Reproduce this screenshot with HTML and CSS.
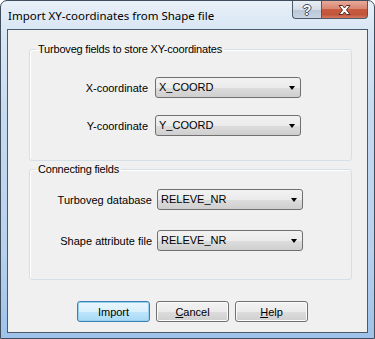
FILE: index.html
```html
<!DOCTYPE html>
<html lang="en">
<head>
    <meta charset="UTF-8">
    <meta name="viewport" content="width=device-width, initial-scale=1.0">
    <title>Import XY-coordinates from Shape file</title>
    <link rel="stylesheet" href="styles.css">
</head>
<body>

<div class="window">
    <div class="titlebar">
        <span class="title">Import XY-coordinates from Shape file</span>
        <div class="caption-buttons">
            <span class="caption-btn help-btn">?</span>
            <span class="caption-btn close-btn">
                <svg width="15" height="12" viewBox="0 0 15 12">
                    <path d="M2 1.5 L5.5 1.5 L7.5 4 L9.5 1.5 L13 1.5 L9.5 6 L13 10.5 L9.5 10.5 L7.5 8 L5.5 10.5 L2 10.5 L5.5 6 Z" fill="#fff" stroke="#5a2a22" stroke-width="1" stroke-linejoin="round"/>
                </svg>
            </span>
        </div>
    </div>

    <div class="client">
        <fieldset class="group">
            <legend>Turboveg fields to store XY-coordinates</legend>
            <div class="field-grid">
                <label for="xcoord">X-coordinate</label>
                <div class="combo" id="xcoord">X_COORD<span class="arrow"></span></div>
                <label for="ycoord">Y-coordinate</label>
                <div class="combo" id="ycoord">Y_COORD<span class="arrow"></span></div>
            </div>
        </fieldset>

        <fieldset class="group group-connect">
            <legend>Connecting fields</legend>
            <div class="field-grid field-grid-wide">
                <label for="tvdb">Turboveg database</label>
                <div class="combo" id="tvdb">RELEVE_NR<span class="arrow"></span></div>
                <label for="shapefile">Shape attribute file</label>
                <div class="combo" id="shapefile">RELEVE_NR<span class="arrow"></span></div>
            </div>
        </fieldset>

        <div class="button-row">
            <button class="btn btn-default">Import</button>
            <button class="btn"><u>C</u>ancel</button>
            <button class="btn"><u>H</u>elp</button>
        </div>
    </div>
</div>

</body>
</html>
```

FILE: styles.css
```css
html {
    background-color: #fff;
}
body {
    margin: 0;
    font-family: 'Liberation Sans', Arial, sans-serif;
    font-size: 11px;
    color: #000;
}
.window {
    width: 375px;
    height: 339px;
    box-sizing: border-box;
    border: 1px solid #3f4d5c;
    border-radius: 7px 7px 0 0;
    padding: 0 6px 5px 6px;
    background: linear-gradient(180deg, #e8f0f8 0, #dae7f4 26px, #c4daf0 120px, #b7d1ee 250px, #9fc2ea 100%);
    overflow: hidden;
}
.titlebar {
    height: 28px;
    display: flex;
    align-items: flex-start;
}
.title {
    font-family: 'Noto Sans', 'Open Sans', sans-serif;
    font-size: 11.5px;
    line-height: 16px;
    padding-top: 7px;
    padding-left: 1px;
    color: #000;
}
.caption-buttons {
    margin-left: auto;
    display: flex;
}
.caption-btn {
    height: 18px;
    display: flex;
    align-items: center;
    justify-content: center;
    border: 1px solid #4e5a68;
    border-top: none;
    box-sizing: border-box;
}
.help-btn {
    width: 29px;
    border-right: none;
    border-radius: 0 0 0 4px;
    background: linear-gradient(180deg, #e9eef4 0, #d4dde8 50%, #b9c6d6 51%, #c8d4e2 100%);
    font-family: 'Liberation Sans', Arial, sans-serif;
    font-weight: bold;
    font-size: 14px;
    color: #fff;
    text-shadow: -1px 0 #3e4a57, 1px 0 #3e4a57, 0 -1px #3e4a57, 0 1px #3e4a57;
}
.close-btn {
    width: 47px;
    border-radius: 0 0 4px 0;
    background: linear-gradient(180deg, #e9a99a 0, #d98672 45%, #c75a3f 50%, #c1553c 80%, #d6785c 100%);
}
.client {
    height: 304px;
    box-sizing: border-box;
    border: 1px solid #4a5a6b;
    background-color: #f0f0f0;
    padding-top: 13px;
}
.group {
    margin: 0 15px 0 21px;
    padding: 21px 0 24px 0;
    border: 1px solid #d5dfe5;
    border-radius: 3px;
    box-shadow: inset 1px 1px 0 #fff;
}
.group legend {
    margin-left: 6px;
    padding: 0 2px;
    line-height: 13px;
    letter-spacing: -0.2px;
}
.group-connect {
    margin-top: 2px;
    padding-top: 13px;
    padding-bottom: 28px;
}
.field-grid {
    display: grid;
    grid-template-columns: 118px 146px;
    column-gap: 7px;
    row-gap: 17px;
    align-items: center;
}
.group-connect .field-grid {
    row-gap: 20px;
}
.field-grid-wide {
    grid-template-columns: 122px 146px;
    column-gap: 5px;
}
.field-grid label {
    text-align: right;
}
.combo {
    position: relative;
    height: 21px;
    box-sizing: border-box;
    border: 1px solid #707070;
    border-radius: 3px;
    background: linear-gradient(180deg, #f2f2f2 0, #ebebeb 50%, #dddddd 51%, #cfcfcf 100%);
    padding-left: 3px;
    line-height: 19px;
}
.arrow {
    position: absolute;
    right: 5px;
    top: 8px;
    width: 0;
    height: 0;
    border-left: 3.5px solid transparent;
    border-right: 3.5px solid transparent;
    border-top: 4px solid #000;
}
.button-row {
    display: flex;
    gap: 6px;
    padding-left: 69px;
    margin-top: 21px;
}
.btn {
    width: 73px;
    height: 21px;
    padding: 0;
    border: 1px solid #707070;
    border-radius: 3px;
    background: linear-gradient(180deg, #f2f2f2 0, #ebebeb 50%, #dddddd 51%, #cfcfcf 100%);
    font-family: 'Liberation Sans', Arial, sans-serif;
    font-size: 11px;
    color: #000;
    box-shadow: inset 0 0 0 1px #fcfcfc;
}
.btn-default {
    border-color: #3c7fb1;
    background: linear-gradient(180deg, #eaf6fd 0, #d9f0fc 50%, #bee6fd 51%, #a7d9f5 100%);
    box-shadow: inset 0 0 0 1px #98d1ef;
}
```
